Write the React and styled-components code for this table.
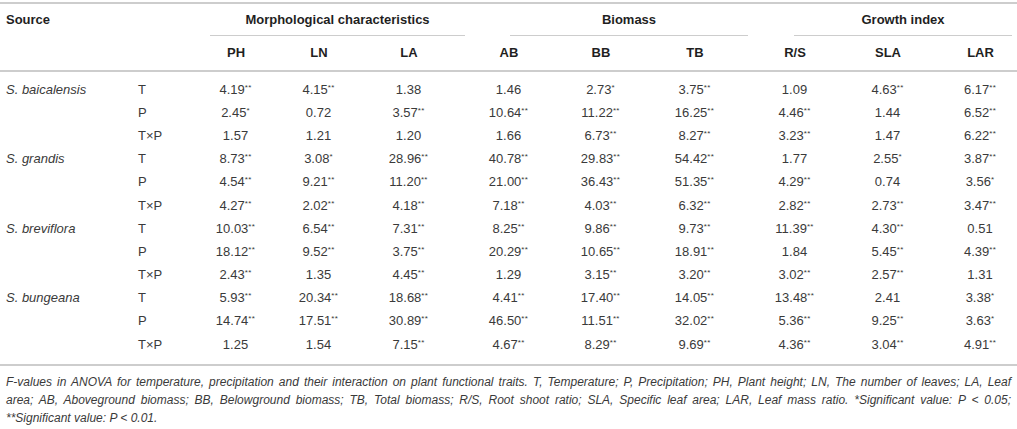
import React from "react";
import styled, { createGlobalStyle } from "styled-components";

const Global = createGlobalStyle`
  html, body { margin: 0; padding: 0; background: #fff; }
  body { font-family: "Liberation Sans", Arial, sans-serif; }
`;

const Page = styled.div`
  width: 1017px;
  padding-top: 2px;
`;

const Table = styled.table`
  width: 1017px;
  table-layout: fixed;
  border-collapse: collapse;
  border-top: 2px solid #cdcdcd;
  border-bottom: 2px solid #cdcdcd;
  font-size: 13px;
  color: #3a3a3a;
`;

const HeadRow = styled.tr`
  border-bottom: ${(p) => (p.$ruled ? "2px solid #cdcdcd" : "none")};
`;

const Th = styled.th`
  font-weight: bold;
  color: #1f1f1f;
  line-height: 16px;
  padding: ${(p) => p.$pad || "0"};
  padding-left: ${(p) => (p.$left ?? 0)}px;
  text-align: ${(p) => p.$align || "center"};
  vertical-align: top;
`;

const GroupLabel = styled.div`
  margin: 0 ${(p) => p.$mr}px 0 ${(p) => p.$ml}px;
  padding-bottom: 7px;
  border-bottom: 1px solid #cdcdcd;
  text-align: center;
`;

const Td = styled.td`
  line-height: 16px;
  padding-top: ${(p) => (p.$first ? 9.6 : 3.6)}px;
  padding-bottom: ${(p) => (p.$last ? 11.6 : 3.6)}px;
  padding-left: ${(p) => p.$left || 0}px;
  text-align: ${(p) => p.$align || "center"};
  white-space: nowrap;
`;

const Species = styled.span`
  font-style: italic;
`;

const Sig = styled.span`
  font-size: 8px;
  vertical-align: 4px;
  line-height: 0;
  letter-spacing: 0.3px;
`;

const Note = styled.div`
  margin-top: 7px;
  font-size: 12px;
  font-style: italic;
  line-height: 18px;
  color: #3a3a3a;
  padding: 0 6px 0 6px;
`;

const NoteLine = styled.div`
  white-space: nowrap;
  text-align: justify;
  text-align-last: ${(p) => (p.$justify ? "justify" : "left")};
`;

const columns = [
  { key: "PH", width: 92 },
  { key: "LN", width: 74 },
  { key: "LA", width: 106 },
  { key: "AB", width: 94 },
  { key: "BB", width: 90 },
  { key: "TB", width: 98 },
  { key: "R/S", width: 102 },
  { key: "SLA", width: 84 },
  { key: "LAR", width: 87, shift: 14 },
];

const groups = [
  { label: "Morphological characteristics", span: 3, ml: 20, mr: -3 },
  { label: "Biomass", span: 3, ml: 48, mr: -4 },
  { label: "Growth index", span: 3, ml: 50, mr: 5 },
];

const data = [
  ["S. baicalensis", [
    ["T", "4.19**", "4.15**", "1.38", "1.46", "2.73*", "3.75**", "1.09", "4.63**", "6.17**"],
    ["P", "2.45*", "0.72", "3.57**", "10.64**", "11.22**", "16.25**", "4.46**", "1.44", "6.52**"],
    ["T×P", "1.57", "1.21", "1.20", "1.66", "6.73**", "8.27**", "3.23**", "1.47", "6.22**"],
  ]],
  ["S. grandis", [
    ["T", "8.73**", "3.08*", "28.96**", "40.78**", "29.83**", "54.42**", "1.77", "2.55*", "3.87**"],
    ["P", "4.54**", "9.21**", "11.20**", "21.00**", "36.43**", "51.35**", "4.29**", "0.74", "3.56*"],
    ["T×P", "4.27**", "2.02**", "4.18**", "7.18**", "4.03**", "6.32**", "2.82**", "2.73**", "3.47**"],
  ]],
  ["S. breviflora", [
    ["T", "10.03**", "6.54**", "7.31**", "8.25**", "9.86**", "9.73**", "11.39**", "4.30**", "0.51"],
    ["P", "18.12**", "9.52**", "3.75**", "20.29**", "10.65**", "18.91**", "1.84", "5.45**", "4.39**"],
    ["T×P", "2.43**", "1.35", "4.45**", "1.29", "3.15**", "3.20**", "3.02**", "2.57**", "1.31"],
  ]],
  ["S. bungeana", [
    ["T", "5.93**", "20.34**", "18.68**", "4.41**", "17.40**", "14.05**", "13.48**", "2.41", "3.38*"],
    ["P", "14.74**", "17.51**", "30.89**", "46.50**", "11.51**", "32.02**", "5.36**", "9.25**", "3.63*"],
    ["T×P", "1.25", "1.54", "7.15**", "4.67**", "8.29**", "9.69**", "4.36**", "3.04**", "4.91**"],
  ]],
];

function Value({ text }) {
  const m = text.match(/^([^*]+)(\**)$/);
  return (
    <>
      {m[1]}
      {m[2] && <Sig>{m[2]}</Sig>}
    </>
  );
}

export default function App() {
  const rows = [];
  data.forEach(([species, sub], gi) => {
    sub.forEach((r, ri) => {
      const idx = gi * 3 + ri;
      const first = idx === 0;
      const last = idx === 11;
      rows.push(
        <tr key={idx}>
          <Td $align="left" $left={6} $first={first} $last={last}>
            {ri === 0 && <Species>{species}</Species>}
          </Td>
          <Td $align="left" $left={10} $first={first} $last={last}>{r[0]}</Td>
          {r.slice(1).map((v, ci) => (
            <Td key={ci} $left={columns[ci].shift} $first={first} $last={last}>
              <Value text={v} />
            </Td>
          ))}
        </tr>
      );
    });
  });

  return (
    <Page>
      <Global />
      <Table>
        <colgroup>
          <col style={{ width: 128 }} />
          <col style={{ width: 62 }} />
          {columns.map((c) => (
            <col key={c.key} style={{ width: c.width }} />
          ))}
        </colgroup>
        <thead>
          <HeadRow>
            <Th $align="left" $left={6} $pad="8px 0 0">Source</Th>
            <Th />
            {groups.map((g) => (
              <Th key={g.label} colSpan={g.span} $pad="8px 0 0">
                <GroupLabel $ml={g.ml} $mr={g.mr}>{g.label}</GroupLabel>
              </Th>
            ))}
          </HeadRow>
          <HeadRow $ruled>
            <Th />
            <Th />
            {columns.map((c) => (
              <Th key={c.key} $pad="9px 0 9px" $left={c.shift}>{c.key}</Th>
            ))}
          </HeadRow>
        </thead>
        <tbody>{rows}</tbody>
      </Table>
      <Note>
        <NoteLine $justify>
          F-values in ANOVA for temperature, precipitation and their interaction on plant functional traits. T, Temperature; P, Precipitation; PH, Plant height; LN, The number of leaves; LA, Leaf
        </NoteLine>
        <NoteLine $justify>
          area; AB, Aboveground biomass; BB, Belowground biomass; TB, Total biomass; R/S, Root shoot ratio; SLA, Specific leaf area; LAR, Leaf mass ratio. *Significant value: P &lt; 0.05;
        </NoteLine>
        <NoteLine>**Significant value: P &lt; 0.01.</NoteLine>
      </Note>
    </Page>
  );
}
